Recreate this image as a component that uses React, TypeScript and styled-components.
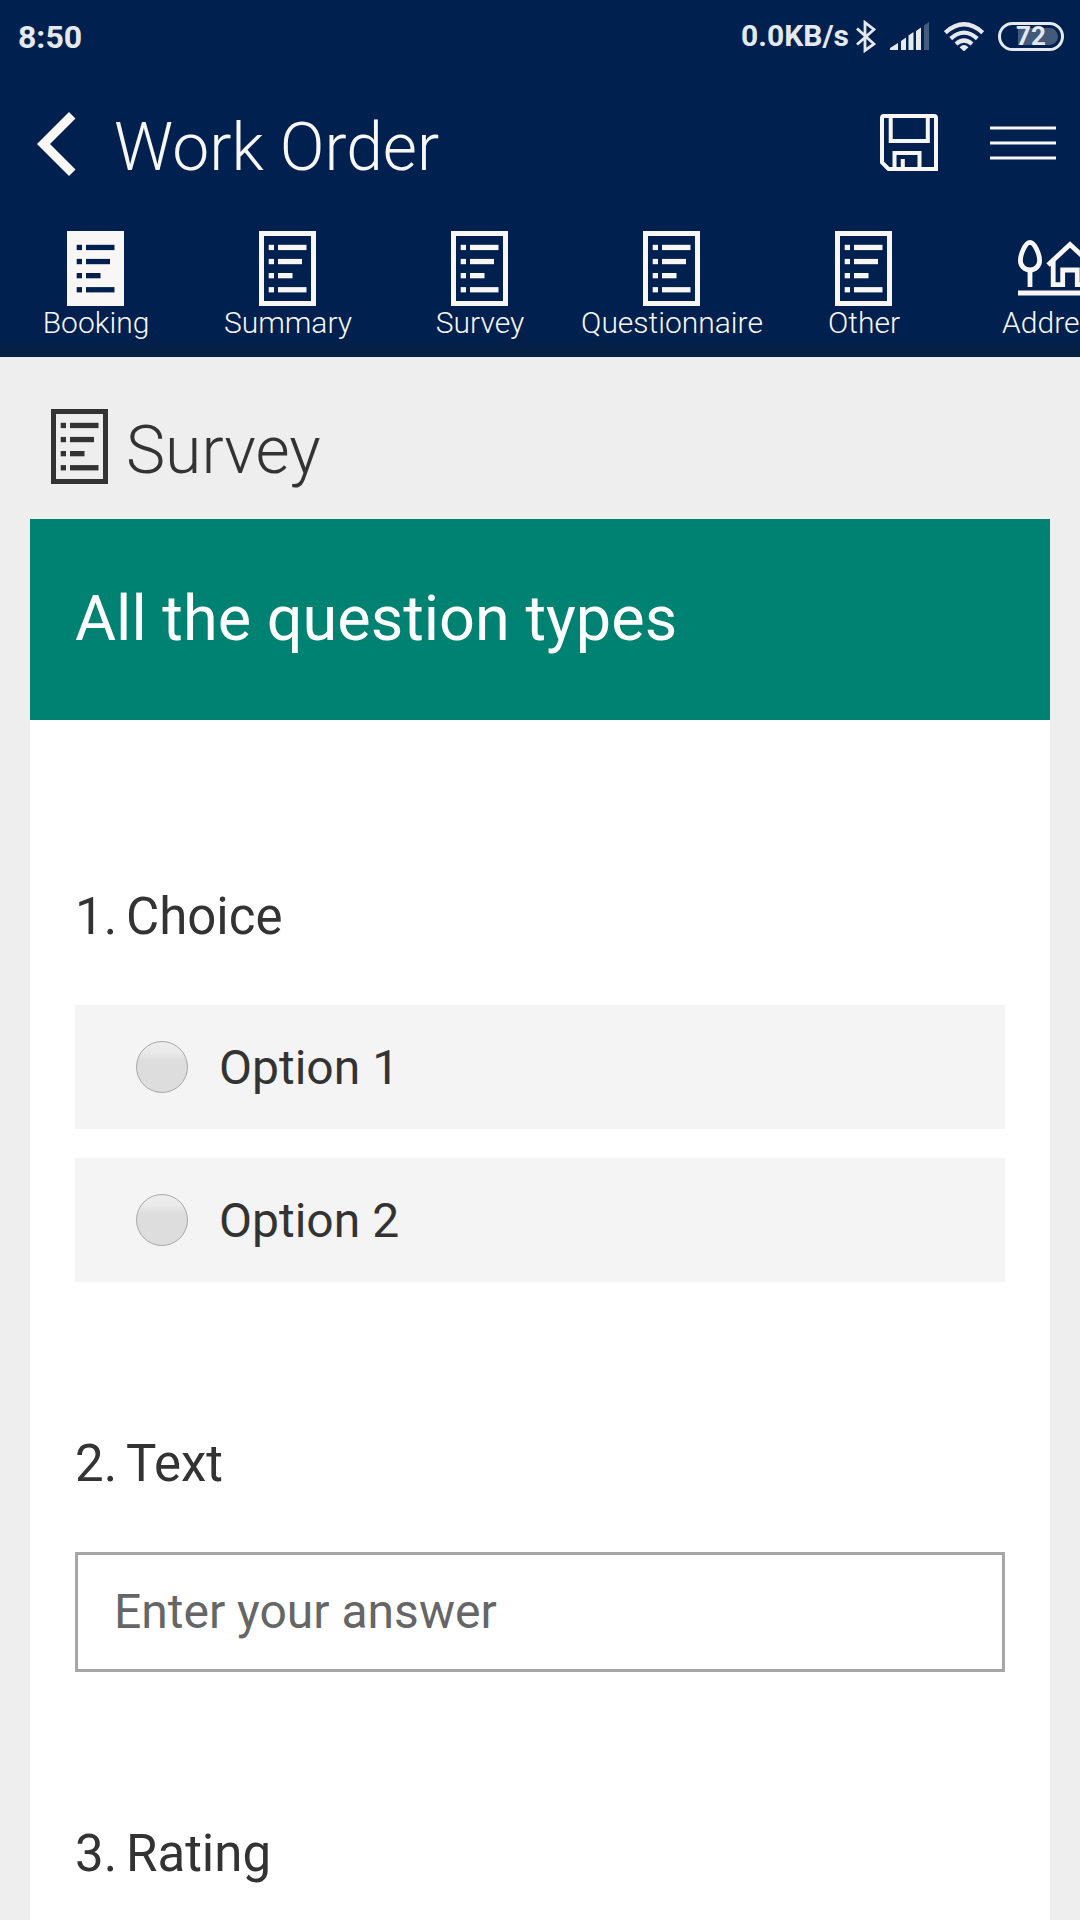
import React from 'react';
import styled, { createGlobalStyle } from 'styled-components';

const GlobalStyle = createGlobalStyle`
  *, *::before, *::after { box-sizing: border-box; }
  body {
    margin: 0;
    background: #eeeeee;
    color: #333333;
    font-family: Roboto, "Noto Sans", sans-serif;
  }
  h1, h2, h3 { margin: 0; }
  svg { display: block; flex: none; }
`;

const Screen = styled.div`
  display: flex;
  flex-direction: column;
  min-height: 100vh;
`;

const Header = styled.header`
  background: linear-gradient(to bottom, #00204f calc(100% - 24px), #082042 100%);
  color: #f8f7f5;
`;

const StatusBar = styled.div`
  display: flex;
  align-items: center;
  justify-content: space-between;
  height: 72px;
  padding: 0 16px 0 18px;
  color: #e5e9ee;
  font-weight: 700;
`;

const Clock = styled.time`
  padding-top: 2px;
  font-size: 32px;
  line-height: 38px;
`;

const StatusItems = styled.div`
  display: flex;
  align-items: center;
  gap: 14px;
`;

const Network = styled.div`
  display: flex;
  align-items: center;
  gap: 7px;
  font-size: 30px;
  line-height: 36px;
`;

const TitleBar = styled.div`
  display: flex;
  align-items: center;
  height: 144px;
  padding: 0 24px 0 37px;
`;

const IconButton = styled.button`
  display: flex;
  padding: 0;
  border: 0;
  background: none;
  color: inherit;
  cursor: pointer;
`;

const AppTitle = styled.h1`
  flex: 1;
  padding: 8px 0 0 38px;
  font-size: 66px;
  line-height: 78px;
  font-weight: 300;
`;

const Actions = styled.div`
  display: flex;
  align-items: center;
  gap: 52px;
  padding-bottom: 3px;
`;

const Tabs = styled.nav`
  display: flex;
  overflow: hidden;
  padding: 15px 0 18px;
`;

const Tab = styled.a`
  display: flex;
  flex: none;
  flex-direction: column;
  align-items: center;
  width: 192px;
  color: inherit;
  font-size: 30px;
  line-height: 33px;
  font-weight: 300;
  text-decoration: none;
`;

const PageHeading = styled.div`
  display: flex;
  align-items: flex-start;
  gap: 17px;
  padding: 52px 51px 29px;
`;

const PageTitle = styled.h2`
  padding-top: 3px;
  font-size: 66px;
  line-height: 78px;
  font-weight: 300;
`;

const Card = styled.main`
  display: flex;
  flex: 1;
  flex-direction: column;
  margin: 0 30px;
  background: #ffffff;
`;

const FormTitle = styled.h2`
  padding: 59px 45px 61px;
  background: #008272;
  color: #ffffff;
  font-size: 63px;
  line-height: 81px;
  font-weight: 400;
`;

const Questions = styled.form`
  display: flex;
  flex-direction: column;
  gap: 149px;
  padding: 164px 45px 33px;
`;

const Question = styled.section`
  display: flex;
  flex-direction: column;
  gap: 55px;
`;

const QuestionTitle = styled.h3`
  display: flex;
  font-size: 51px;
  line-height: 66px;
  font-weight: 400;
`;

const Number = styled.span`
  min-width: 51px;
`;

const Options = styled.div`
  display: flex;
  flex-direction: column;
  gap: 29px;
`;

const Option = styled.label`
  display: flex;
  align-items: center;
  gap: 31px;
  height: 124px;
  padding: 0 61px;
  background: #f4f4f4;
`;

const OptionText = styled.span`
  padding-top: 2px;
  font-size: 48px;
  line-height: 60px;
`;

const Radio = styled.input`
  flex: none;
  width: 52px;
  height: 52px;
  margin: 0;
  appearance: none;
  border: 1px solid #a8a8a8;
  border-radius: 50%;
  background: linear-gradient(to bottom, #ededed 0%, #eaeaea 20%, #dddddd 38%, #dddddd 100%);
  &:checked { background: #008272; }
`;

const TextBox = styled.input`
  width: 100%;
  height: 120px;
  padding: 0 36px 2px;
  border: 3px solid #a6a6a6;
  border-radius: 0;
  background: #ffffff;
  color: #333333;
  font-family: inherit;
  font-size: 48px;
  outline: none;
  &::placeholder { color: #666666; opacity: 1; }
`;

const BatteryBox = styled.div`
  position: relative;
  display: flex;
  align-items: center;
  justify-content: center;
  width: 66px;
  height: 29px;
  border: 3px solid currentColor;
  border-radius: 15px;
  font-size: 26px;
  line-height: 26px;
`;

const BatteryFill = styled.span`
  position: absolute;
  top: 3px;
  right: 3px;
  bottom: 3px;
  width: 40px;
  border-radius: 0 9px 9px 0;
  background: #445a7d;
`;

const BatteryText = styled.span`
  position: relative;
`;

const DocIcon = ({ filled = false }: { filled?: boolean }) => (
  <svg width="58" height="75" viewBox="0 0 58 75" aria-hidden="true">
    {filled ? (
      <rect width="57" height="75" fill="currentColor" />
    ) : (
      <rect x="2.5" y="2.5" width="52" height="70" fill="none" stroke="currentColor" strokeWidth="5" />
    )}
    <g fill={filled ? '#00204f' : 'currentColor'}>
      {[28.5, 24, 14.5, 28.5].map((width, i) => (
        <React.Fragment key={i}>
          <rect x="9.7" y={13.8 + i * 14.1} width="5.3" height="5.3" />
          <rect x="19" y={13.8 + i * 14.1} width={width} height="5.3" />
        </React.Fragment>
      ))}
    </g>
  </svg>
);

const AddressIcon = () => (
  <svg width="76" height="75" viewBox="0 0 76 75" fill="none" stroke="currentColor" strokeWidth="4.8" aria-hidden="true">
    <path d="M12 11.3C7.5 11.3 2.4 23 2.4 29.5C2.4 35 6.5 39 12 39S21.6 35 21.6 29.5C21.6 23 16.5 11.3 12 11.3Z" />
    <path d="M12 39V56M0 62H76" />
    <path d="M30 34L52 13.5L74 34M35.2 30V53.6H44.7V39H59.3V53.6H68.8V30" />
  </svg>
);

const BackIcon = () => (
  <svg width="39" height="64" viewBox="0 0 39 64" aria-hidden="true">
    <path d="M32 0L38.5 6.5L13 32L38.5 57.5L32 64L0 32Z" fill="currentColor" />
  </svg>
);

const SaveIcon = () => (
  <svg width="58" height="57" viewBox="0 0 58 57" fill="none" stroke="currentColor" strokeWidth="4" aria-hidden="true">
    <path d="M4 2H54Q56 2 56 4V55H8.5L2 48.5V4Q2 2 4 2Z" />
    <path d="M10.7 2V26.9H47.8V2M14.5 55V39H39.5V55M22.8 45V55" />
  </svg>
);

const MenuIcon = () => (
  <svg width="66" height="34" viewBox="0 0 66 34" stroke="currentColor" strokeWidth="3.2" aria-hidden="true">
    <path d="M0 2H66M0 17H66M0 32H66" />
  </svg>
);

const BluetoothIcon = () => (
  <svg width="20" height="33" viewBox="0 0 20 33" fill="none" stroke="currentColor" strokeWidth="2.8" aria-hidden="true">
    <path d="M1 8.5L18 24L9 30.5V2.5L18 9.5L1 24.5" />
  </svg>
);

const SignalIcon = () => (
  <svg width="40" height="29" viewBox="0 0 40 29" fill="currentColor" aria-hidden="true">
    <path d="M0 28V26L8 21V28ZM11 28V19L16 15.5V28ZM18.5 28V13.5L23.5 10V28ZM26 28V9L31 5.5V28Z" />
    <path d="M34 28V3.5L39 0V28Z" opacity="0.3" />
  </svg>
);

const WifiIcon = () => (
  <svg width="40" height="29" viewBox="0 0 40 29" fill="none" stroke="currentColor" strokeWidth="4.2" aria-hidden="true">
    <path d="M1.3 10.6Q20 -6 38.7 10.6M6.7 16.6Q20 4.6 33.3 16.6M12 22Q20 15 28 22" />
    <path d="M15.6 25.2Q20 21 24.4 25.2L20 29.4Z" fill="currentColor" stroke="none" />
  </svg>
);

const tabs = ['Booking', 'Summary', 'Survey', 'Questionnaire', 'Other', 'Address'];

export default function App() {
  return (
    <Screen>
      <GlobalStyle />
      <Header>
        <StatusBar>
          <Clock>8:50</Clock>
          <StatusItems>
            <Network>
              0.0KB/s
              <BluetoothIcon />
            </Network>
            <SignalIcon />
            <WifiIcon />
            <BatteryBox>
              <BatteryFill />
              <BatteryText>72</BatteryText>
            </BatteryBox>
          </StatusItems>
        </StatusBar>
        <TitleBar>
          <IconButton type="button" aria-label="Back"><BackIcon /></IconButton>
          <AppTitle>Work Order</AppTitle>
          <Actions>
            <IconButton type="button" aria-label="Save"><SaveIcon /></IconButton>
            <IconButton type="button" aria-label="Menu"><MenuIcon /></IconButton>
          </Actions>
        </TitleBar>
        <Tabs>
          {tabs.map((name) => (
            <Tab key={name} href={`#${name.toLowerCase()}`}>
              {name === 'Address' ? <AddressIcon /> : <DocIcon filled={name === 'Booking'} />}
              {name}
            </Tab>
          ))}
        </Tabs>
      </Header>
      <PageHeading>
        <DocIcon />
        <PageTitle>Survey</PageTitle>
      </PageHeading>
      <Card>
        <FormTitle>All the question types</FormTitle>
        <Questions>
          <Question>
            <QuestionTitle id="q1"><Number>1.</Number>Choice</QuestionTitle>
            <Options role="radiogroup" aria-labelledby="q1">
              {['Option 1', 'Option 2'].map((option) => (
                <Option key={option}>
                  <Radio type="radio" name="choice" value={option} />
                  <OptionText>{option}</OptionText>
                </Option>
              ))}
            </Options>
          </Question>
          <Question>
            <QuestionTitle id="q2"><Number>2.</Number>Text</QuestionTitle>
            <TextBox type="text" aria-labelledby="q2" placeholder="Enter your answer" />
          </Question>
          <Question>
            <QuestionTitle><Number>3.</Number>Rating</QuestionTitle>
          </Question>
        </Questions>
      </Card>
    </Screen>
  );
}
